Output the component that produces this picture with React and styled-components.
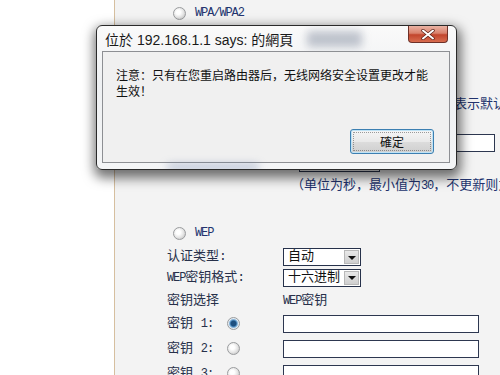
import styled, { createGlobalStyle } from 'styled-components'

const Global = createGlobalStyle`
  html, body{
    margin: 0;
    padding: 0;
    background: #fff;
  }
`

const Page = styled.div`
  position: relative;
  display: flex;
  width: 500px;
  height: 375px;
  overflow: hidden;
  font-family: "Liberation Mono", "Noto Sans CJK SC", monospace;
  font-size: 13px;
  color: #27304a;
`

const Gutter = styled.div`
  flex: 0 0 114px;
  background: #fff;
  border-right: 1px solid #d6bf9f;
`

const Content = styled.div`
  flex: 1;
  background: #f3f3f3;
  padding: 3px 0 0 52px;
  display: flex;
  flex-direction: column;
`

const Row = styled.div`
  display: flex;
  align-items: ${p => p.$top ? 'flex-start' : 'center'};
  height: ${p => p.$h}px;
  box-sizing: border-box;
  flex: 0 0 auto;
  white-space: nowrap;
  margin-top: ${p => p.$mt || 0}px;
  padding-left: ${p => p.$pl || 0}px;
  padding-top: ${p => p.$pt || 0}px;
`

const Label = styled.div`
  flex: 0 0 ${p => p.$w}px;
  line-height: 16px;
`

const Mono = styled.span`
  font-size: 12px;
  letter-spacing: -1.1px;
`

const Blue = styled.span`
  color: #22336e;
  line-height: 16px;
  padding-left: ${p => p.$pl || 0}px;
`

const RadioDot = styled.span`
  display: inline-block;
  width: 11px;
  height: 11px;
  border-radius: 50%;
  border: 1px solid #9a9c9e;
  background: ${p => p.$on
    ? 'radial-gradient(circle at 50% 50%, #1d4f80 0 2.5px, #5a97c9 3.5px, #e3ebf2 5px)'
    : 'radial-gradient(circle at 40% 40%, #ffffff 0 2px, #e6e6e6 5px, #cfcfcf 7px)'};
  flex: 0 0 auto;
`

const RadioCell = styled.div`
  flex: 0 0 ${p => p.$w}px;
  display: flex;
  align-items: center;
`

const Select = styled.div`
  display: flex;
  align-items: center;
  width: 72px;
  height: 16px;
  border: 1px solid #26314a;
  background: #fff;
  padding-left: 4px;
  box-sizing: content-box;
  span{
    flex: 1;
    line-height: 16px;
    color: #111;
  }
`

const Arrow = styled.div`
  flex: 0 0 15px;
  height: 14px;
  margin-right: 1px;
  background: linear-gradient(#e8e8e8, #cfcfcf);
  border: 1px solid #b8b8b8;
  box-sizing: border-box;
  display: flex;
  align-items: center;
  justify-content: center;
  &::after{
    content: '';
    border-left: 4px solid transparent;
    border-right: 4px solid transparent;
    border-top: 4px solid #111;
    margin-top: 1px;
  }
`

const Field = styled.div`
  width: ${p => p.$w}px;
  height: 16px;
  border: 1px solid #2d3750;
  background: #fff;
  flex: 0 0 auto;
`

const Dialog = styled.div`
  position: absolute;
  left: 96px;
  top: 25px;
  width: 361px;
  height: 145px;
  box-sizing: border-box;
  border: 1px solid #2a2a2a;
  border-radius: 6px;
  background: linear-gradient(#fafafa, #eef0f2 40%, #f4f5f6);
  box-shadow: 1px 5px 12px 3px rgba(0, 0, 0, 0.55);
  padding: 0 6px 6px 5px;
  display: flex;
  flex-direction: column;
  overflow: hidden;
  font-family: "Liberation Sans", "Noto Sans CJK SC", sans-serif;
  color: #111;
`

const TitleBar = styled.div`
  position: relative;
  height: 25px;
  flex: 0 0 25px;
  display: flex;
  align-items: center;
  padding-left: 3px;
  font-size: 14px;
  font-family: "Liberation Sans", "Noto Sans CJK TC", sans-serif;
  color: #1a1a1a;
`

const Haze = styled.div`
  position: absolute;
  left: ${p => p.$x}px;
  top: ${p => p.$y}px;
  width: ${p => p.$w}px;
  height: ${p => p.$h}px;
  background: ${p => p.$c};
  filter: blur(4px);
  border-radius: 3px;
  pointer-events: none;
`

const Close = styled.div`
  position: absolute;
  right: 2px;
  top: 0;
  width: 40px;
  height: 17px;
  box-sizing: border-box;
  border: 1px solid #6e3128;
  border-top: none;
  border-radius: 0 0 4px 4px;
  background: linear-gradient(#eab3a4 0%, #d9816c 45%, #c2452d 55%, #d86d4f 100%);
  display: flex;
  align-items: center;
  justify-content: center;
`

const Panel = styled.div`
  flex: 1;
  position: relative;
  border: 1px solid #8d8f93;
  background: #f0f0f0;
  padding: 15px 13px 8px 13px;
  display: flex;
  flex-direction: column;
  font-size: 12px;
  line-height: 16px;
`

const Message = styled.p`
  margin: 0;
  flex: 1;
  font-family: "Noto Sans CJK SC", sans-serif;
`

const ButtonRow = styled.div`
  display: flex;
  justify-content: flex-end;
  padding-right: 2px;
`

const OkButton = styled.button`
  width: 84px;
  height: 25px;
  border: 1px solid #3c7fb1;
  border-radius: 3px;
  background: linear-gradient(#f6f6f6, #e9e9e9 50%, #dcdcdc 51%, #cfcfcf);
  box-shadow: inset 0 0 0 1px #bfe3f6;
  font-family: "Noto Sans CJK TC", sans-serif;
  font-size: 12px;
  color: #111;
  padding: 0;
  position: relative;
  &::after{
    content: '';
    position: absolute;
    inset: 2px;
    border: 1px dotted #444;
    border-radius: 1px;
    opacity: 0.5;
  }
`

function Radio({ on }){
  return <RadioDot $on={on} />
}

function DropDown({ value }){
  return (
    <Select>
      <span>{value}</span>
      <Arrow />
    </Select>
  )
}

function KeyRow({ n, on }){
  return (
    <Row $h={25}>
      <Label $w={60}>密钥 <Mono>{n}:</Mono></Label>
      <RadioCell $w={56}><Radio on={on} /></RadioCell>
      <Field $w={194} />
    </Row>
  )
}

export default function App(){
  return (
    <>
      <Global />
      <Page>
        <Gutter />
        <Content>
          <Row $h={20} $pl={6}>
            <Radio />
            <Blue $pl={9}><Mono>WPA/WPA2</Mono></Blue>
          </Row>
          <Row $h={22}>
            <Label $w={132}>认证类型:</Label>
            <DropDown value="自动" />
          </Row>
          <Row $h={22}>
            <Label $w={132}>加密算法:</Label>
            <DropDown value="自动" />
          </Row>
          <Row $h={24}>
            <Label $w={132}><Mono>Radius</Mono>服务器<Mono>IP:</Mono></Label>
            <Field $w={120} />
          </Row>
          <Row $h={42} $top $pt={6}>
            <Label $w={132}><Mono>Radius</Mono>端口:</Label>
            <Field $w={80} />
            <Blue $pl={12}><Mono>(1-65535,0</Mono>表示默认端口<Mono>:1812)</Mono></Blue>
          </Row>
          <Row $h={20}>
            <Label $w={132}><Mono>Radius</Mono>密码:</Label>
            <Field $w={194} />
          </Row>
          <Row $h={20}>
            <Label $w={132}>组密钥更新周期:</Label>
            <Field $w={79} />
          </Row>
          <Row $h={26}>
            <Label $w={124} />
            <Blue>（单位为秒，最小值为<Mono>30</Mono>，不更新则为<Mono>0</Mono>）</Blue>
          </Row>
          <Row $h={20} $mt={24} $pl={6}>
            <Radio />
            <Blue $pl={9}><Mono>WEP</Mono></Blue>
          </Row>
          <Row $h={20} $mt={4}>
            <Label $w={116}>认证类型:</Label>
            <DropDown value="自动" />
          </Row>
          <Row $h={21}>
            <Label $w={116}><Mono>WEP</Mono>密钥格式:</Label>
            <DropDown value="十六进制" />
          </Row>
          <Row $h={20} $mt={3}>
            <Label $w={116}>密钥选择</Label>
            <Label $w={100}><Mono>WEP</Mono>密钥</Label>
          </Row>
          <KeyRow n="1" on />
          <KeyRow n="2" />
          <KeyRow n="3" />
        </Content>

        <Dialog>
          <TitleBar>
            <Haze $x={205} $y={5} $w={55} $h={16} $c="rgba(120,130,150,0.45)" />
            位於 192.168.1.1 says: 的網頁
            <Close>
              <svg width="14" height="11" viewBox="0 0 14 11">
                <path d="M2 1.5 L12 9.5 M12 1.5 L2 9.5" stroke="#5a1f16" strokeWidth="3.4" strokeLinecap="round" />
                <path d="M2 1.5 L12 9.5 M12 1.5 L2 9.5" stroke="#fff" strokeWidth="2" strokeLinecap="round" />
              </svg>
            </Close>
          </TitleBar>
          <Panel>
            <Message>
              注意：只有在您重启路由器后，无线网络安全设置更改才能<br />生效！
            </Message>
            <ButtonRow>
              <OkButton>確定</OkButton>
            </ButtonRow>
          </Panel>
          <Haze $x={70} $y={139} $w={92} $h={4} $c="rgba(90,110,160,0.6)" />
        </Dialog>
      </Page>
    </>
  )
}
